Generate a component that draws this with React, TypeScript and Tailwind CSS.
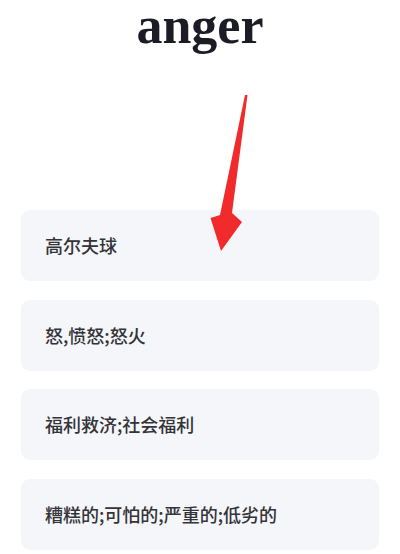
import React from "react";

const meanings = [
	"高尔夫球",
	"怒,愤怒;怒火",
	"福利救济;社会福利",
	"糟糕的;可怕的;严重的;低劣的",
];

const Arrow: React.FC = () => (
	<svg
		className="pointer-events-none absolute left-0 top-0"
		width="400"
		height="554"
		viewBox="0 0 400 554"
	>
		<polygon
			points="245,95 247.5,95 232,213 242,222 221,251 210.5,218 220,215"
			fill="#f12b2b"
		/>
	</svg>
);

export default function App() {
	return (
		<div className="relative h-[554px] w-[400px] overflow-hidden bg-white">
			<h1
				className="text-center text-[52px] font-bold leading-[52px] text-[#1c1c27]"
				style={{ fontFamily: '"Liberation Serif", "Times New Roman", serif' }}
			>
				anger
			</h1>

			<ul className="mt-[158px] flex flex-col gap-[18.5px] px-[21px]">
				{meanings.map((text) => (
					<li
						key={text}
						className="flex h-[71px] items-center rounded-[9px] bg-[#f5f6f9] pl-[24px] text-[18px] font-medium text-[#333338]"
						style={{ fontFamily: '"Noto Sans CJK SC", "Noto Sans", sans-serif' }}
					>
						{text}
					</li>
				))}
			</ul>

			<Arrow />
		</div>
	);
}
